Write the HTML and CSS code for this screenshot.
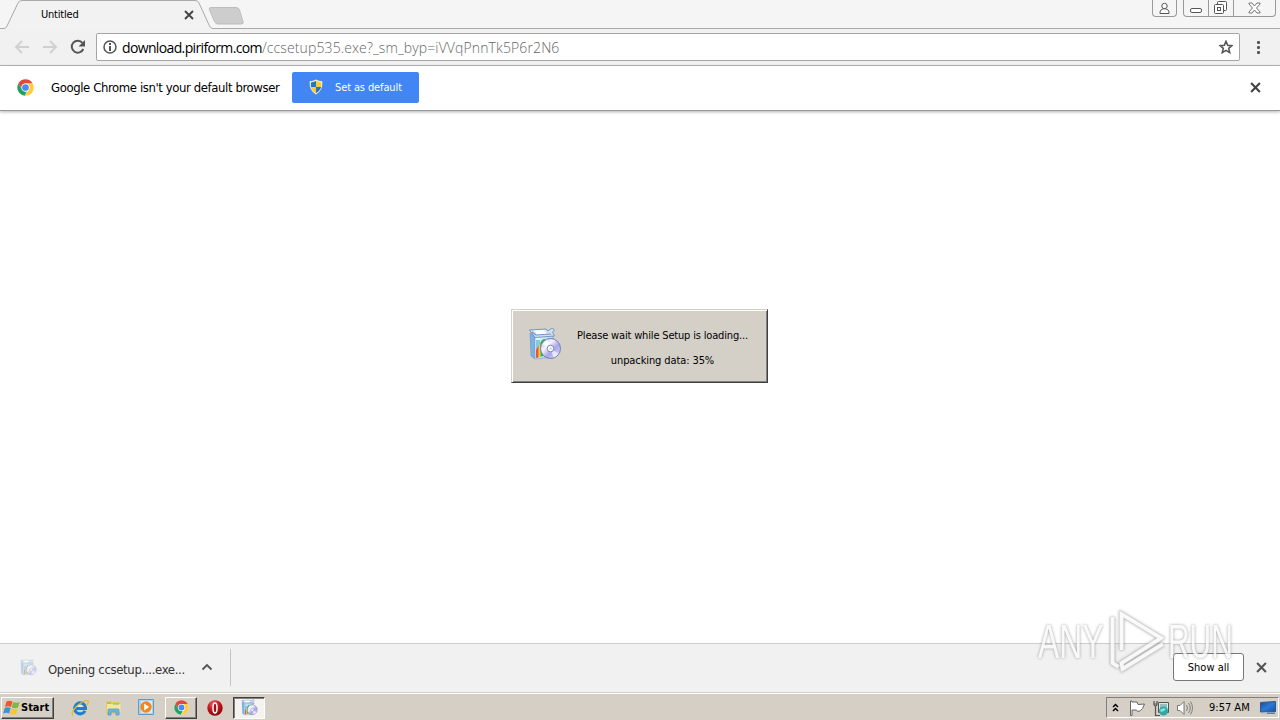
FILE: index.html
```html
<!DOCTYPE html>
<html lang="en">
<head>
  <meta charset="UTF-8">
  <title>Untitled</title>
  <link rel="stylesheet" href="styles.css">
</head>
<body>
  <!-- shared icons -->
  <svg class="defs" width="0" height="0">
    <defs>
      <linearGradient id="boxFront" x1="0" x2="1" y1="0" y2="0.4">
        <stop offset="0" stop-color="#f4fbff"/><stop offset="1" stop-color="#9ed4f3"/>
      </linearGradient>
      <linearGradient id="disc" x1="0" x2="1" y1="0" y2="1">
        <stop offset="0" stop-color="#b4b5ea"/><stop offset=".35" stop-color="#f5f3ff"/>
        <stop offset=".6" stop-color="#a9a6e6"/><stop offset="1" stop-color="#e3e4fb"/>
      </linearGradient>
      <linearGradient id="screen" x1="0" x2="1" y1="0" y2="1">
        <stop offset="0" stop-color="#174b9e"/><stop offset=".5" stop-color="#2d79d6"/><stop offset="1" stop-color="#194e9e"/>
      </linearGradient>
      <radialGradient id="redBall" cx=".4" cy=".25" r=".8">
        <stop offset="0" stop-color="#f0656a"/><stop offset=".5" stop-color="#c3141b"/><stop offset="1" stop-color="#850509"/>
      </radialGradient>
    </defs>
    <symbol id="installer" viewBox="0 0 34 34">
      <path d="M2 6l5 3v23l-4-3z" fill="#7fb0e2" stroke="#6a94c4" stroke-width=".6"/>
      <path d="M7 9l18-1v22L7 32z" fill="url(#boxFront)" stroke="#7ea8d0" stroke-width=".7"/>
      <path d="M1.500 3L18 2l2 2 4-3 2.500 2-2 2 2 4L7 10.500z" fill="#cfe0f2" stroke="#6f8fb8" stroke-width=".9"/>
      <path d="M6 3.500l10-.5 3 4-10 1z" fill="#fff"/>
      <path d="M4 5l4 3 15-1" fill="none" stroke="#7895b9" stroke-width="1.200"/>
      <path d="M8 13h4v17l-4 1z" fill="#7cc9f3"/>
      <path d="M8 23l3-5v12l-3 1z" fill="#e85832"/>
      <path d="M12 17c1-4 3-5 5-5l-2 17-4 1z" fill="#35b743"/>
      <path d="M10.500 19l2-3v14l-2 .5z" fill="#f2cc3e"/>
      <circle cx="22.500" cy="21.500" r="10" fill="url(#disc)" stroke="#6c70b5" stroke-width=".9"/>
      <path d="M22.500 21.500L14.500 17a9 9 0 0 1 5-4z" fill="#fff" opacity=".75"/>
      <path d="M22.500 21.500l8 5a9 9 0 0 1-5 4z" fill="#fff" opacity=".65"/>
      <circle cx="22.500" cy="21.500" r="3.300" fill="#fff" stroke="#7b82b8"/>
      <circle cx="22.500" cy="21.500" r="1.300" fill="#c6d6d8"/>
    </symbol>
    <symbol id="chrome" viewBox="0 0 48 48">
      <circle cx="24" cy="24" r="23" fill="#fff"/>
      <path d="M24 1a23 23 0 0 1 20 11.500H24a11.500 11.500 0 0 0-10 17.200L4 12.500A23 23 0 0 1 24 1z" fill="#df4a3a"/>
      <path d="M4 12.500l10 17.200a11.500 11.500 0 0 0 14 5L22 47A23 23 0 0 1 4 12.500z" fill="#1da362"/>
      <path d="M44 12.500A23 23 0 0 1 22 47l12-17.300a11.500 11.500 0 0 0-10-17.200z" fill="#fecd3f"/>
      <circle cx="24" cy="24" r="11" fill="#fff"/>
      <circle cx="24" cy="24" r="9.500" fill="#4a8af4"/>
    </symbol>
    <symbol id="cross" viewBox="0 0 10 10">
      <path d="M1 1l8 8M9 1L1 9" stroke="currentColor" stroke-width="1.9" fill="none"/>
    </symbol>
  </svg>

  <div class="browser">
    <div class="titlebar">
      <svg class="tab-shape" width="1280" height="29" viewBox="0 0 1280 29">
        <path d="M5 29L18.500 2.500Q19.500.5 22 .5H195Q198 .5 199 3L210 26.500Q211 28.500 213 28.500V29z" fill="#f2f2f2"/>
        <path d="M0 28.500H4Q6 28.500 7 26L18 3Q19 .5 22 .5H195Q198 .5 199 3L209.500 26Q210.500 28.500 213 28.500H1280" fill="none" stroke="#aaa"/>
        <path d="M211 7.500H236Q238.500 7.500 239.500 10L243 21.500Q244 24 241 24H218Q215.500 24 214.500 21.500L209.500 10Q208.500 7.500 211 7.500z" fill="#cdcdcd" stroke="#bdbdbd"/>
      </svg>
      <div class="tab">
        <span class="tab-title">Untitled</span>
        <svg class="tab-close" width="10" height="10"><use href="#cross"/></svg>
      </div>
      <div class="window-buttons">
        <div class="wbtn user">
          <svg width="13" height="13" viewBox="0 0 13 13" fill="#fff" stroke="#555"><circle cx="6.500" cy="4" r="2.700"/><path d="M2 11.500V10q0-2 3-3.200h3q3 1.200 3 3.200v1.500z"/></svg>
        </div>
        <div class="wgroup">
          <div class="wbtn min"><svg width="13" height="13" viewBox="0 0 13 13" fill="#fff" stroke="#555"><rect x=".5" y="6.500" width="11" height="4" rx="1.500"/></svg></div>
          <div class="wbtn max"><svg width="14" height="14" viewBox="0 0 14 14" fill="#fff" stroke="#555"><rect x="3.500" y=".5" width="9" height="9" rx="1"/><rect x=".5" y="3.500" width="9" height="9" rx="1"/><rect x="3.500" y="6.500" width="3" height="3"/></svg></div>
          <div class="wbtn close"><svg width="13" height="12" viewBox="0 0 13 12" fill="#fff" stroke="#666" stroke-width=".9"><path d="M1 1h3l2.500 3L9 1h3v1L8.500 6l3.500 4v1H9L6.500 8 4 11H1v-1l3.500-4L1 2z"/></svg></div>
        </div>
      </div>
    </div>

    <div class="toolbar">
      <svg class="nav" width="16" height="14" viewBox="0 0 16 14"><path d="M15 7H2M8 1L2 7l6 6" fill="none" stroke="#d0d0d0" stroke-width="1.900"/></svg>
      <svg class="nav" width="16" height="14" viewBox="0 0 16 14"><path d="M1 7h13M8 1l6 6-6 6" fill="none" stroke="#d0d0d0" stroke-width="1.900"/></svg>
      <svg class="reload" width="16" height="16" viewBox="0 0 16 16"><path d="M13.300 10A6 6 0 1 1 12.500 4" fill="none" stroke="#555" stroke-width="2"/><path d="M15 1v6.500H8.500z" fill="#555"/></svg>
      <div class="omnibox">
        <svg class="info" width="14" height="14" viewBox="0 0 14 14"><circle cx="7" cy="7" r="6" fill="none" stroke="#555" stroke-width="1.500"/><path d="M6 6h2v5H6zM6 3h2v2H6z" fill="#555"/></svg>
        <span class="host">download.piriform.com</span><span class="path">/ccsetup535.exe?_sm_byp=iVVqPnnTk5P6r2N6</span>
        <svg class="star" width="14" height="14" viewBox="0 0 14 14"><path d="M7 1.300l1.700 3.900 4.200.4-3.200 2.800 1 4.200L7 10.400l-3.700 2.200 1-4.200L1.100 5.600l4.200-.4z" fill="none" stroke="#555" stroke-width="1.600"/></svg>
      </div>
      <div class="menu"><i></i><i></i><i></i></div>
    </div>

    <div class="infobar">
      <svg class="chrome-logo" width="17" height="17"><use href="#chrome"/></svg>
      <span class="infobar-text">Google Chrome isn't your default browser</span>
      <button class="default-btn">
        <svg width="14" height="16" viewBox="0 0 14 16">
          <path d="M7 .5Q10 2.200 13.400 2.300 14 12 7 15.500 0 12 .6 2.300 4 2.200 7 .5z" fill="#f3e9b6"/>
          <path d="M7 2Q4.500 3.400 2 3.500V8h5z" fill="#2476c3"/><path d="M7 2q2.500 1.400 5 1.500V8H7z" fill="#f7cb3a"/>
          <path d="M2 8q1 4 5 6V8z" fill="#f7cb3a"/><path d="M12 8q-1 4-5 6V8z" fill="#2476c3"/>
        </svg>
        <span>Set as default</span>
      </button>
      <svg class="infobar-close" width="11" height="11"><use href="#cross"/></svg>
    </div>

    <main class="page">
      <div class="setup-dialog">
        <svg width="34" height="34"><use href="#installer"/></svg>
        <div class="setup-text">
          <p class="line-wait">Please wait while Setup is loading...</p>
          <p class="line-progress">unpacking data: 35%</p>
        </div>
      </div>
    </main>

    <div class="downloads">
      <div class="download-item">
        <svg class="faded" width="17" height="17"><use href="#installer"/></svg>
        <span class="file-name">Opening ccsetup....exe...</span>
        <svg class="chevron" width="12" height="8" viewBox="0 0 12 8"><path d="M1.500 6.500L6 2l4.500 4.500" fill="none" stroke="#555" stroke-width="1.800"/></svg>
      </div>
      <button class="show-all"><span>Show all</span></button>
      <svg class="downloads-close" width="11" height="11"><use href="#cross"/></svg>
    </div>
  </div>

  <div class="taskbar">
    <div class="start">
      <svg width="17" height="16" viewBox="0 0 17 16">
        <path d="M3.500 1.500q3-1.500 6 0L8 7Q5 5.500 2 7z" fill="#e95a2b"/>
        <path d="M10.300 2q3 1.500 6.200 0L15 7.500q-3 1.500-6.300 0z" fill="#7dba38"/>
        <path d="M1.700 8q3-1.500 6 0l-1.500 5.500q-3-1.500-6 0z" fill="#3f91d6"/>
        <path d="M8.500 8.500q3 1.500 6.300 0L13.200 14q-3 1.500-6.300 0z" fill="#f8c630"/>
      </svg>
      <span>Start</span>
    </div>
    <div class="quick">
      <svg width="18" height="18" viewBox="0 0 18 18">
        <path d="M14 11.800A5.500 5.500 0 1 1 14.500 8.500v1H4" fill="none" stroke="#1c7fd0" stroke-width="3"/>
        <path d="M6 8q.5-2 3-2t3 2z" fill="#d9f1fc"/>
        <path d="M2 16.500Q-1 14 6 7q8-7 11-5 1.200 1-1 4" fill="none" stroke="#e9b92d" stroke-width="1.300"/>
      </svg>
    </div>
    <div class="quick">
      <svg width="17" height="17" viewBox="0 0 17 17">
        <path d="M1 3q0-1 1-1h4l1 1h8v12H1z" fill="#e9c95c"/><path d="M2 5h13.500v8H2z" fill="#f8e698"/>
        <path d="M2 4h4M8 5h6" stroke="#70b78b"/>
        <path d="M3 16v-5q0-1 1-1h9q1 0 1 1v5h-3v-3H6v3z" fill="#68b7e3" stroke="#4796c5" stroke-width=".7"/>
      </svg>
    </div>
    <div class="quick">
      <svg width="16" height="17" viewBox="0 0 16 17"><path d="M.5.5h15v15H.5z" fill="#a9d3f3" stroke="#5a9bd0"/><path d="M3 2h11v12H3z" fill="#d8ebf9"/><circle cx="8" cy="8" r="5.700" fill="#f3861c"/><path d="M6.200 4.500l5 3.500-5 3.500z" fill="#fff"/></svg>
    </div>
    <div class="task"><svg width="15" height="15"><use href="#chrome"/></svg></div>
    <div class="quick opera">
      <svg width="16" height="16" viewBox="0 0 16 16"><circle cx="8" cy="8" r="7.700" fill="url(#redBall)"/><ellipse cx="8" cy="8" rx="2" ry="5" fill="#a60d13" stroke="#fff" stroke-width="1.500"/></svg>
    </div>
    <div class="task active"><svg width="17" height="17"><use href="#installer"/></svg></div>
    <div class="tray">
      <svg class="expand" width="7" height="10" viewBox="0 0 7 10"><path d="M1 4L3.500 1.500 6 4M1 8L3.500 5.500 6 8" fill="none" stroke="#000" stroke-width="1.500"/></svg>
      <svg class="flag" width="17" height="16" viewBox="0 0 17 16"><path d="M1.500 1v14.500h1.500V10h4.500l1 1.500q3 0 5-3L15.500 4 9 4.500 8 2H3V1z" fill="#fff" stroke="#666"/></svg>
      <svg class="network" width="17" height="16" viewBox="0 0 17 16">
        <path d="M5.500 2.500h10v10h-10z" fill="#dbe8e8" stroke="#555"/><path d="M7 4h7v6H7z" fill="#8fc0c6"/>
        <path d="M1 1v3q0 2 1.500 2v9.500H7M4 1v3q0 2-1.500 2M1 4h3" fill="none" stroke="#555" stroke-width="1.200"/>
        <circle cx="10.500" cy="11" r="4.500" fill="#2fa7a3"/><path d="M7 10q3-3 6-1-2 3-5 3z" fill="#8edfd3"/>
      </svg>
      <svg class="sound" width="18" height="16" viewBox="0 0 18 16"><path d="M1.500 5.500H4l4-4v13l-4-4H1.500z" fill="#fff" stroke="#777"/><path d="M10.500 5q2 3 0 6M12.500 3q3.500 5 0 10M14.500 1.500q4 6.500 0 13" fill="none" stroke="#777" stroke-width=".9"/></svg>
      <span class="clock">9:57 AM</span>
      <svg class="desktop" width="16" height="14" viewBox="0 0 16 14"><path d="M.5 1.500l15-1v10L.5 11z" fill="url(#screen)" stroke="#315987"/><path d="M1 12l6-.5.5 2H2z" fill="#b8c6d2"/><path d="M7 11.500h8v1.500H7z" fill="#5c80ab"/></svg>
    </div>
  </div>

  <div class="watermark">
    <span class="wm-text">ANY</span>
    <svg class="wm-logo" width="58" height="66" viewBox="0 0 58 66">
      <path class="wm-edge" d="M4.500 9v46l6 4M13.500 42V6L53 30 13.500 55l1 6L55 36"/>
      <path d="M4.500 9v46l6 4M13.500 42V6L53 30 13.500 55l1 6L55 36"/>
    </svg>
    <span class="wm-text wm-run">RUN</span>
  </div>
</body>
</html>
```
FILE: styles.css
```css
* {
  box-sizing: border-box;
}
body {
  margin: 0;
  width: 1280px;
  height: 720px;
  overflow: hidden;
  display: flex;
  flex-direction: column;
  position: relative;
  background: #fff;
  color: #000;
  font-family: "DejaVu Sans Condensed", "DejaVu Sans", sans-serif;
  font-size: 11px;
  white-space: nowrap;
}
svg {
  display: block;
  flex: none;
}
button {
  font: inherit;
  padding: 0;
}
.defs {
  position: absolute;
}
.browser {
  flex: 1;
  min-height: 0;
  display: flex;
  flex-direction: column;
}

/* title bar */
.titlebar {
  height: 29px;
  display: flex;
  justify-content: space-between;
  position: relative;
  background: #f5f5f5;
}
.tab-shape {
  position: absolute;
  left: 0;
  top: 0;
}
.tab {
  width: 210px;
  height: 29px;
  padding: 0 16px 0 41px;
  display: flex;
  align-items: center;
  justify-content: space-between;
  position: relative;
}
.tab-title {
  letter-spacing: -0.2px;
}
.tab-close {
  color: #444;
}
.window-buttons {
  display: flex;
  gap: 6px;
  margin-right: 4px;
  height: 17px;
  position: relative;
}
.wbtn {
  display: flex;
  justify-content: center;
  align-items: center;
}
.user {
  width: 25px;
  border: 1px solid #999;
  border-top: 0;
  border-radius: 0 0 4px 4px;
}
.wgroup {
  display: flex;
  border: 1px solid #999;
  border-top: 0;
  border-radius: 0 0 4px 4px;
}
.min {
  width: 25px;
  border-right: 1px solid #999;
}
.max {
  width: 25px;
  border-right: 1px solid #999;
}
.close {
  width: 41px;
}

/* toolbar */
.toolbar {
  height: 37px;
  display: flex;
  align-items: center;
  padding: 0 20px 0 14px;
  background: #f1f1f1;
  border-bottom: 1px solid #b5b5b5;
}
.nav {
  margin-right: 12px;
}
.reload {
  margin-right: 10px;
}
.omnibox {
  flex: 1;
  height: 28px;
  display: flex;
  align-items: center;
  padding: 0 6px;
  background: #fff;
  border: 1px solid #a5a5a5;
  border-radius: 2px;
  font-family: "Open Sans", sans-serif;
  font-weight: 300;
  font-size: 14px;
}
.info {
  margin-right: 5px;
}
.host {
  font-weight: 400;
  letter-spacing: -0.64px;
}
.path {
  color: #666;
  letter-spacing: 0.12px;
}
.star {
  margin-left: auto;
}
.menu {
  width: 3px;
  margin-left: 17px;
  display: flex;
  flex-direction: column;
  gap: 2px;
}
.menu i {
  height: 3px;
  border-radius: 1px;
  background: #555;
}

/* default browser bar */
.infobar {
  height: 45px;
  display: flex;
  align-items: center;
  padding: 0 19px 2px 17px;
  background: #fff;
  border-bottom: 1px solid #999;
  box-shadow: 0 1px 3px rgba(0,0,0,0.3);
}
.infobar-text {
  width: 229px;
  margin: 0 12px 0 17px;
  font-size: 13px;
  letter-spacing: -0.4px;
}
.default-btn {
  width: 127px;
  height: 31px;
  display: flex;
  align-items: center;
  gap: 12px;
  padding-left: 17px;
  border: 0;
  border-radius: 2px;
  background: #4285f4;
  color: #fff;
  letter-spacing: -0.12px;
}
.infobar-close {
  margin-left: auto;
  color: #444;
}

/* page with the setup window */
.page {
  flex: 1;
  min-height: 0;
  padding: 198px 0 0 511px;
}
.setup-dialog {
  width: 257px;
  height: 74px;
  display: flex;
  padding: 17px 0 0 16px;
  gap: 14px;
  background: #d4d0c8;
  border: 1px solid;
  border-color: #d4d0c8 #404040 #404040 #d4d0c8;
  box-shadow: inset 1px 1px #fff, inset -1px -1px #808080;
}
.setup-text {
  width: 173px;
  padding-top: 1px;
  text-align: center;
}
.setup-text p {
  margin: 0;
  height: 25px;
  line-height: 16px;
}
.line-wait {
  letter-spacing: -0.17px;
}
.line-progress {
  letter-spacing: -0.1px;
}

/* downloads */
.downloads {
  height: 49px;
  display: flex;
  align-items: center;
  padding: 0 13px 2px 0;
  background: #f1f1f1;
  border-top: 1px solid #ccc;
}
.download-item {
  width: 231px;
  height: 37px;
  display: flex;
  align-items: center;
  padding-left: 20px;
  border-right: 1px solid #c4c4c4;
}
.faded {
  opacity: 0.5;
}
.file-name {
  width: 138px;
  margin: 4px 15px 0 11px;
  color: #333;
  font-size: 13px;
  letter-spacing: -0.34px;
}
.show-all {
  width: 71px;
  height: 28px;
  margin: 0 12px 0 auto;
  background: #fff;
  border: 1px solid #777;
  border-radius: 3px;
  color: #000;
}
.downloads-close {
  color: #555;
}

/* taskbar */
.taskbar {
  height: 28px;
  display: flex;
  align-items: center;
  padding: 2px 1px 0 1px;
  background: #d5cfc6;
  border-top: 1px solid #d5cfc6;
  box-shadow: inset 0 1px #fff;
}
.start {
  width: 53px;
  height: 22px;
  display: flex;
  align-items: center;
  gap: 1px;
  padding-left: 1px;
  margin-right: 17px;
  font-weight: bold;
  border: 1px solid;
  border-color: #fff #404040 #404040 #fff;
  box-shadow: inset -1px -1px #808080;
}
.quick {
  width: 18px;
  margin-right: 15px;
  display: flex;
  justify-content: center;
}
.task {
  width: 32px;
  height: 22px;
  display: flex;
  align-items: center;
  justify-content: center;
  margin: 0 9px 0 -5px;
  border: 1px solid;
  border-color: #fff #404040 #404040 #fff;
  box-shadow: inset -1px -1px #808080;
}
.opera {
  margin-right: 14px;
}
.active {
  background: #f5f3f0;
  border-color: #404040 #fff #fff #404040;
  box-shadow: inset 1px 1px #808080;
}
.tray {
  width: 173px;
  height: 21px;
  margin-left: auto;
  display: flex;
  align-items: center;
  padding-left: 5px;
  border: 1px solid;
  border-color: #808080 #fff #fff #808080;
}
.expand {
  margin-right: 10px;
}
.flag {
  margin-right: 7px;
}
.network {
  margin-right: 6px;
}
.clock {
  width: 41px;
  margin: 0 10px 0 15px;
}

/* translucent logo over the page */
.watermark {
  position: absolute;
  left: 1038px;
  top: 608px;
  height: 66px;
  display: flex;
  opacity: 0.8;
  filter: drop-shadow(0 0 1.5px #888);
}
.wm-text {
  margin-top: 13px;
  width: 65px;
  font-family: "Liberation Sans Narrow", "Liberation Sans", sans-serif;
  font-size: 49px;
  line-height: 40px;
  color: #fafafa;
  transform: scaleX(0.65);
  transform-origin: 0 0;
}
.wm-run {
  transform: scaleX(0.61);
}
.wm-logo {
  margin: 0 2px 0 5px;
}
.wm-logo path {
  fill: none;
  stroke: #fafafa;
  stroke-width: 3.5px;
}
.wm-logo .wm-edge {
  stroke: #d0d0d0;
  stroke-width: 4.5px;
}
```
